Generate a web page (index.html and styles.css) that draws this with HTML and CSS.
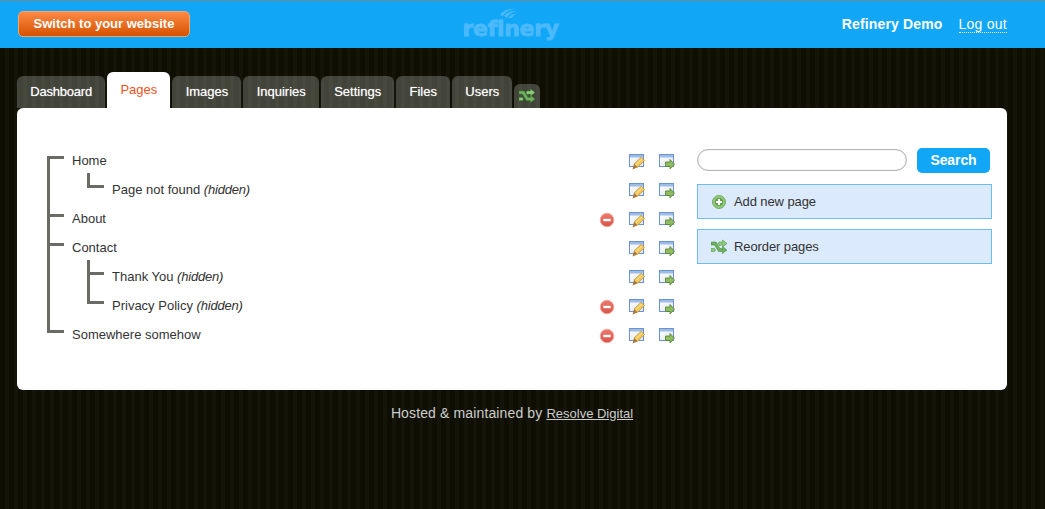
FILE: index.html
```html
<!DOCTYPE html>
<html lang="en">
<head>
    <meta charset="UTF-8">
    <meta name="viewport" content="width=device-width, initial-scale=1.0">
    <title>Refinery - Pages</title>
    <link rel="stylesheet" href="styles.css">
</head>
<body>
    <svg class="sprites" width="0" height="0" aria-hidden="true">
        <defs>
            <linearGradient id="win-body" x1="0" y1="0" x2="1" y2="1">
                <stop offset="0" stop-color="#ffffff"/>
                <stop offset="1" stop-color="#dfe6ee"/>
            </linearGradient>
            <linearGradient id="del-body" x1="0" y1="0" x2="0" y2="1">
                <stop offset="0" stop-color="#ec7a6c"/>
                <stop offset="1" stop-color="#d9534a"/>
            </linearGradient>
        </defs>
        <symbol id="icon-edit" viewBox="0 0 16 16">
            <rect x="0.5" y="0.5" width="14" height="12" fill="url(#win-body)" stroke="#6b93cc"/>
            <rect x="1" y="1" width="13" height="2.500" fill="#9dbce8"/>
            <path d="M5 10l7.200-6.700 3.300 3.200-7.200 6.900z" fill="#f4c95a" stroke="#b98d2d" stroke-width="0.7"/>
            <path d="M5 10l3.300 3.400-4.800 2.100z" fill="#a9763f"/>
            <path d="M7 10.500l6.200-5.800" stroke="#fbe7a8" stroke-width="0.9"/>
        </symbol>
        <symbol id="icon-go" viewBox="0 0 16 16">
            <rect x="0.5" y="0.5" width="14" height="12" fill="url(#win-body)" stroke="#6b93cc"/>
            <rect x="1" y="1" width="13" height="2.500" fill="#9dbce8"/>
            <path d="M6.500 8h4.500V5.500l4.500 4.700-4.500 4.700V12.500H6.500z" fill="#90bb60" stroke="#4f7f2e" stroke-width="0.8"/>
        </symbol>
        <symbol id="icon-delete" viewBox="0 0 16 16">
            <circle cx="8" cy="8" r="6.800" fill="url(#del-body)" stroke="#eeaaa0"/>
            <rect x="4.300" y="6.800" width="7.400" height="2.400" fill="#fff"/>
        </symbol>
        <symbol id="icon-add" viewBox="0 0 16 16">
            <circle cx="8" cy="8" r="6.500" fill="#92c87c" stroke="#74ad5e"/>
            <circle cx="8" cy="8" r="4" fill="#5fa048"/>
            <path d="M7 5h2v2h2v2H9v2H7V9H5V7h2z" fill="#fff"/>
        </symbol>
        <symbol id="icon-reorder" viewBox="0 0 16 16">
            <path d="M0 3h5l4 6.500h2.500V7.500L16 11l-4.500 3.500v-2H7.500L3.500 6H0z" fill="#6db05c" stroke="#3f8a3a" stroke-width="0.5"/>
            <path d="M0 9.500h3.500l1 1.500-1 1.500H0zM8 3h3.500V1L16 4.500 11.500 8V6H9.500L8.800 7 7 4.500z" fill="#8ccc78" stroke="#3f8a3a" stroke-width="0.5"/>
        </symbol>
    </svg>

    <header class="site-bar">
        <a class="switch-btn" href="#">Switch to your website</a>
        <div class="logo">
            <svg class="logo-swoosh" viewBox="0 0 18 10" width="18" height="10" aria-hidden="true">
                <path d="M1 7C4 2 10 0 17 1 12 1 7 3 4 8zM5 8C8 4 12 3 18 3 13 4 10 6 8 10zM9 10c2-2 4-4 8-4-2 1-3 2-4 4z" fill="#4cb9fa"/>
            </svg>
            <span class="logo-text">refinery</span>
        </div>
        <div class="user-links">
            <strong>Refinery Demo</strong>
            <a class="logout" href="#">Log out</a>
        </div>
    </header>

    <nav class="tabs">
        <a class="tab" href="#">Dashboard</a>
        <a class="tab active" href="#">Pages</a>
        <a class="tab" href="#">Images</a>
        <a class="tab" href="#">Inquiries</a>
        <a class="tab" href="#">Settings</a>
        <a class="tab" href="#">Files</a>
        <a class="tab" href="#">Users</a>
        <a class="tab tab-icon" href="#" aria-label="Reorder tabs"><svg width="16" height="16"><use href="#icon-reorder"/></svg></a>
    </nav>

    <main class="panel">
        <ul class="tree">
            <li>
                <div class="row"><span class="title">Home</span><span class="actions"><a href="#"><svg><use href="#icon-edit"/></svg></a><a href="#"><svg><use href="#icon-go"/></svg></a></span></div>
                <ul>
                    <li><div class="row"><span class="title">Page not found <em>(hidden)</em></span><span class="actions"><a href="#"><svg><use href="#icon-edit"/></svg></a><a href="#"><svg><use href="#icon-go"/></svg></a></span></div></li>
                </ul>
            </li>
            <li>
                <div class="row"><span class="title">About</span><span class="actions"><a href="#"><svg><use href="#icon-delete"/></svg></a><a href="#"><svg><use href="#icon-edit"/></svg></a><a href="#"><svg><use href="#icon-go"/></svg></a></span></div>
            </li>
            <li>
                <div class="row"><span class="title">Contact</span><span class="actions"><a href="#"><svg><use href="#icon-edit"/></svg></a><a href="#"><svg><use href="#icon-go"/></svg></a></span></div>
                <ul>
                    <li><div class="row"><span class="title">Thank You <em>(hidden)</em></span><span class="actions"><a href="#"><svg><use href="#icon-edit"/></svg></a><a href="#"><svg><use href="#icon-go"/></svg></a></span></div></li>
                    <li><div class="row"><span class="title">Privacy Policy <em>(hidden)</em></span><span class="actions"><a href="#"><svg><use href="#icon-delete"/></svg></a><a href="#"><svg><use href="#icon-edit"/></svg></a><a href="#"><svg><use href="#icon-go"/></svg></a></span></div></li>
                </ul>
            </li>
            <li>
                <div class="row"><span class="title">Somewhere somehow</span><span class="actions"><a href="#"><svg><use href="#icon-delete"/></svg></a><a href="#"><svg><use href="#icon-edit"/></svg></a><a href="#"><svg><use href="#icon-go"/></svg></a></span></div>
            </li>
        </ul>

        <aside class="sidebar">
            <form class="search">
                <input type="text" class="search-input">
                <button type="button" class="search-btn">Search</button>
            </form>
            <a class="action-box" href="#"><svg><use href="#icon-add"/></svg>Add new page</a>
            <a class="action-box" href="#"><svg><use href="#icon-reorder"/></svg>Reorder pages</a>
        </aside>
    </main>

    <footer class="credits">Hosted &amp; maintained by <a href="#">Resolve Digital</a></footer>
</body>
</html>
```

FILE: styles.css
```css
* { margin: 0; padding: 0; box-sizing: border-box; }
body {
    font-family: "Liberation Sans", Arial, sans-serif;
    font-size: 13px;
    color: #333;
    background-color: #0e0e02;
    background-image: repeating-linear-gradient(90deg, #0e0f02 0, #0e0f02 5px, #141508 5px, #141508 9px);
    min-height: 100vh;
}
.sprites { position: absolute; }
a { color: inherit; text-decoration: none; }
ul { list-style: none; }

/* top bar */
.site-bar {
    height: 48px;
    background: #11a7f6;
    border-top: 1px solid #6f8796;
    display: grid;
    grid-template-columns: 1fr auto 1fr;
    align-items: center;
    padding: 0 38px 0 18px;
    color: #fff;
    font-size: 14px;
}
.switch-btn {
    justify-self: start;
    width: 172px;
    height: 26px;
    line-height: 24px;
    margin-top: -1px;
    text-align: center;
    font-size: 13px;
    font-weight: bold;
    color: #fff;
    border: 1px solid #f5a56a;
    border-radius: 5px;
    background: linear-gradient(#fd8a45, #d65200);
}
.logo { position: relative; width: 96px; height: 30px; margin-left: -4px; text-align: center; white-space: nowrap; }
.logo-swoosh { position: absolute; left: 36px; top: -2px; }
.logo-text {
    font-family: "DejaVu Sans", sans-serif;
    font-weight: bold;
    font-size: 22px;
    line-height: 38px;
    color: #4cb9fa;
    letter-spacing: -0.3px;
    -webkit-text-stroke: 0.8px #4cb9fa;
}
.user-links { justify-self: end; display: flex; gap: 16px; }
.user-links strong { letter-spacing: 0.15px; }
.logout { letter-spacing: 0.25px; border-bottom: 1px dotted #fff; }

/* tabs */
.tabs {
    display: flex;
    align-items: flex-end;
    gap: 2px;
    height: 60px;
    padding-left: 17px;
}
.tab {
    height: 32px;
    line-height: 32px;
    padding: 0 13.2px;
    color: #fff;
    font-size: 13px;
    text-shadow: 0 0 1px rgba(255, 255, 255, 0.6);
    background: rgba(255, 255, 255, 0.22);
    border-radius: 6px 6px 0 0;
}
.tab:first-child { letter-spacing: -0.2px; }
.tab.active {
    height: 36px;
    line-height: 36px;
    background: #fff;
    color: #f0531c;
    text-shadow: none;
}
.tab-icon {
    height: 24px;
    width: 26px;
    padding: 4px 5px;
    display: flex;
}

/* white panel */
.panel {
    width: 990px;
    height: 282px;
    margin-left: 17px;
    padding: 38px 15px 0 30px;
    background: #fff;
    border-radius: 6px;
    display: flex;
    align-items: flex-start;
    gap: 22px;
}
.tree { position: relative; width: 628px; }
.tree ul { position: relative; padding-left: 40px; }
.tree::before, .tree ul::before {
    content: "";
    position: absolute;
    left: 0;
    bottom: 16px;
    width: 3px;
    background: #6b6b66;
}
.tree::before { top: 10px; }
.tree ul::before { left: 40px; top: -2px; }
.row {
    position: relative;
    height: 29px;
    padding-left: 25px;
    display: flex;
    align-items: center;
    justify-content: space-between;
    font-size: 13px;
}
.row::before {
    content: "";
    position: absolute;
    left: 0;
    top: 10px;
    width: 17px;
    height: 3px;
    background: #6b6b66;
}
.title em { letter-spacing: -0.2px; }
.actions { display: flex; gap: 14px; margin-top: 3px; }
.actions a { display: flex; }
.actions svg { width: 16px; height: 16px; }

/* right column */
.sidebar { width: 295px; padding-top: 1px; }
.search { display: flex; align-items: center; gap: 10px; height: 26px; margin-bottom: 11px; }
.search-input {
    width: 210px;
    height: 22px;
    border: 1px solid #b5b5b5;
    border-radius: 11px;
    box-shadow: inset 0 0 1px #999;
}
.search-btn {
    width: 73px;
    height: 25px;
    border: none;
    border-radius: 5px;
    background: #11a7f6;
    color: #fff;
    font-family: inherit;
    font-weight: bold;
    font-size: 14px;
    letter-spacing: -0.1px;
}
.action-box {
    height: 35px;
    margin-bottom: 10px;
    padding-left: 13px;
    display: flex;
    align-items: center;
    gap: 7px;
    background: #dbeafc;
    border: 1px solid #6bbdf5;
    color: #333;
    letter-spacing: -0.1px;
}
.action-box svg { width: 16px; height: 16px; }

.credits {
    width: 990px;
    margin: 15px 0 0 17px;
    text-align: center;
    color: #ccc;
    font-size: 14px;
    letter-spacing: 0.13px;
}
.credits a { font-size: 13px; letter-spacing: 0; text-decoration: underline; }
```
